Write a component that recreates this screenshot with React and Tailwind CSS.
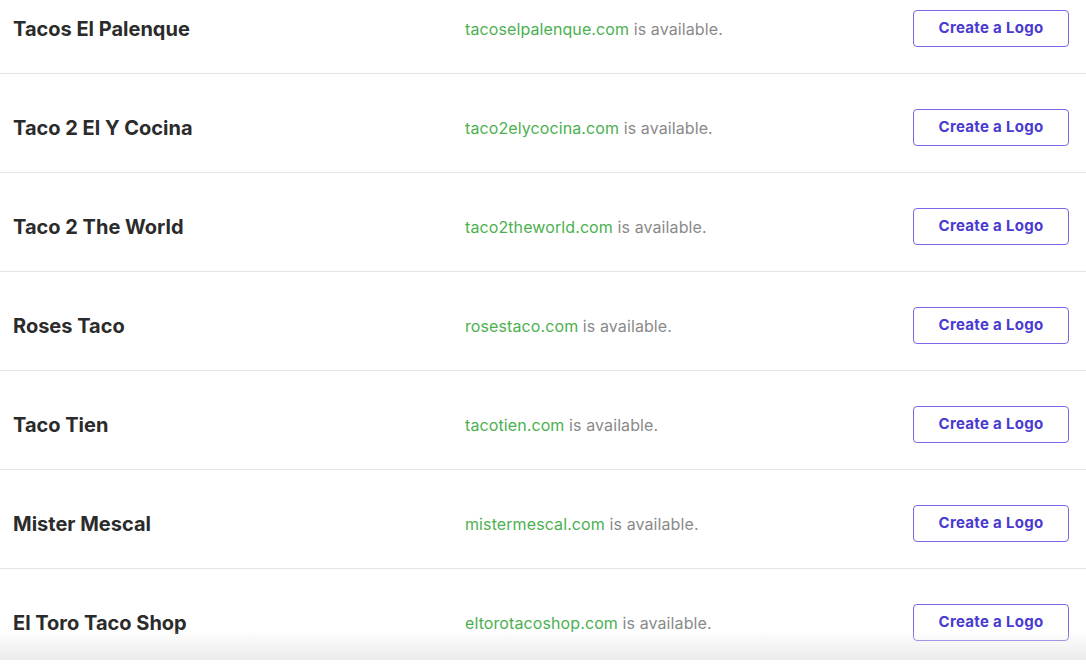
import React from "react";

const names = [
  { name: "Tacos El Palenque", domain: "tacoselpalenque.com" },
  { name: "Taco 2 El Y Cocina", domain: "taco2elycocina.com" },
  { name: "Taco 2 The World", domain: "taco2theworld.com" },
  { name: "Roses Taco", domain: "rosestaco.com" },
  { name: "Taco Tien", domain: "tacotien.com" },
  { name: "Mister Mescal", domain: "mistermescal.com" },
  { name: "El Toro Taco Shop", domain: "eltorotacoshop.com" },
];

const NameRow = ({ name, domain }) => (
  <div className="flex items-center h-[99px] pt-[9px] border-b border-[#e4e4e4] pl-[13px] pr-[17px]">
    <div className="w-[452px] text-[20px] font-bold text-[#2b2b2b]">
      {name}
    </div>
    <div className="flex-1 text-[16px] tracking-[0.1px] text-[#8a8a8a]">
      <span className="text-[#4cb050]">{domain}</span> is available.
    </div>
    <button className="w-[156px] h-[37px] rounded-[4px] border border-[#7668e6] bg-white text-[15px] tracking-[0.3px] font-bold text-[#4a3bd0]">
      Create a Logo
    </button>
  </div>
);

export default function App() {
  return (
    <div
      className="relative h-[666px] overflow-hidden bg-white"
      style={{ fontFamily: "Inter, 'Open Sans', sans-serif" }}
    >
      <div className="-mt-[25px]">
        {names.map((n) => (
          <NameRow key={n.name} {...n} />
        ))}
      </div>
      <div className="absolute left-0 right-0 bottom-0 pointer-events-none">
        <div className="h-[30px] bg-gradient-to-b from-white/0 to-[#ebebeb]" />
        <div className="h-[6px] bg-white" />
      </div>
    </div>
  );
}
